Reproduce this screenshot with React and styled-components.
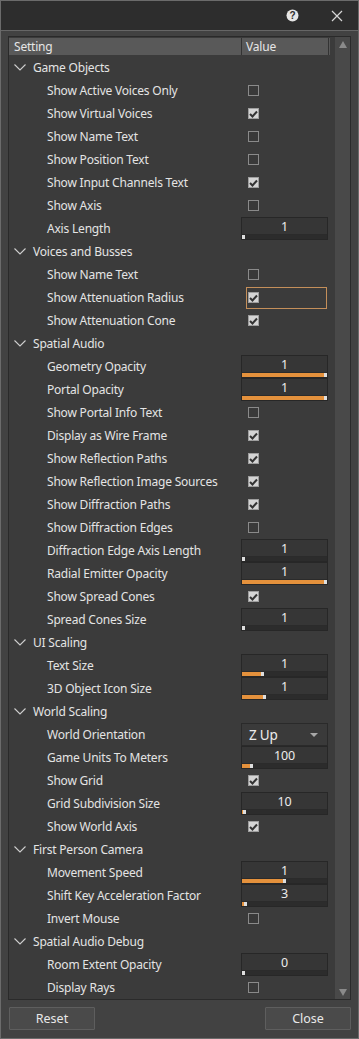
import React from "react";
import styled, { createGlobalStyle } from "styled-components";

const GlobalStyle = createGlobalStyle`
  html, body {
    margin: 0;
    padding: 0;
    background: #404040;
  }
  body {
    font-family: "Noto Sans", "Open Sans", sans-serif;
    font-size: 12px;
    letter-spacing: -0.2px;
    color: #e4e4e4;
  }
`;

const groups = [
  {
    title: "Game Objects",
    items: [
      { label: "Show Active Voices Only", type: "check", value: false },
      { label: "Show Virtual Voices", type: "check", value: true },
      { label: "Show Name Text", type: "check", value: false },
      { label: "Show Position Text", type: "check", value: false },
      { label: "Show Input Channels Text", type: "check", value: true },
      { label: "Show Axis", type: "check", value: false },
      { label: "Axis Length", type: "slider", value: "1", fill: 0 },
    ],
  },
  {
    title: "Voices and Busses",
    items: [
      { label: "Show Name Text", type: "check", value: false },
      { label: "Show Attenuation Radius", type: "check", value: true, focused: true },
      { label: "Show Attenuation Cone", type: "check", value: true },
    ],
  },
  {
    title: "Spatial Audio",
    items: [
      { label: "Geometry Opacity", type: "slider", value: "1", fill: 1 },
      { label: "Portal Opacity", type: "slider", value: "1", fill: 1 },
      { label: "Show Portal Info Text", type: "check", value: false },
      { label: "Display as Wire Frame", type: "check", value: true },
      { label: "Show Reflection Paths", type: "check", value: true },
      { label: "Show Reflection Image Sources", type: "check", value: true },
      { label: "Show Diffraction Paths", type: "check", value: true },
      { label: "Show Diffraction Edges", type: "check", value: false },
      { label: "Diffraction Edge Axis Length", type: "slider", value: "1", fill: 0 },
      { label: "Radial Emitter Opacity", type: "slider", value: "1", fill: 1 },
      { label: "Show Spread Cones", type: "check", value: true },
      { label: "Spread Cones Size", type: "slider", value: "1", fill: 0 },
    ],
  },
  {
    title: "UI Scaling",
    items: [
      { label: "Text Size", type: "slider", value: "1", fill: 0.23 },
      { label: "3D Object Icon Size", type: "slider", value: "1", fill: 0.26 },
    ],
  },
  {
    title: "World Scaling",
    items: [
      { label: "World Orientation", type: "select", value: "Z Up" },
      { label: "Game Units To Meters", type: "slider", value: "100", fill: 0.1 },
      { label: "Show Grid", type: "check", value: true },
      { label: "Grid Subdivision Size", type: "slider", value: "10", fill: 0.01 },
      { label: "Show World Axis", type: "check", value: true },
    ],
  },
  {
    title: "First Person Camera",
    items: [
      { label: "Movement Speed", type: "slider", value: "1", fill: 0.5 },
      { label: "Shift Key Acceleration Factor", type: "slider", value: "3", fill: 0.03 },
      { label: "Invert Mouse", type: "check", value: false },
    ],
  },
  {
    title: "Spatial Audio Debug",
    items: [
      { label: "Room Extent Opacity", type: "slider", value: "0", fill: 0 },
      { label: "Display Rays", type: "check", value: false },
    ],
  },
];

const Window = styled.div`
  width: 359px;
  height: 1039px;
  box-sizing: border-box;
  border: 1px solid #6b6b6b;
  display: flex;
  flex-direction: column;
  background: #424242;
`;

const TitleBar = styled.div`
  height: 29px;
  flex-shrink: 0;
  background: #2d2d2d;
  border-bottom: 1px solid #666666;
  display: flex;
  align-items: center;
  justify-content: flex-end;
  gap: 31px;
  padding-right: 14px;
`;

const IconButton = styled.div`
  width: 14px;
  height: 14px;
  display: flex;
  align-items: center;
  justify-content: center;
`;

const Body = styled.div`
  flex: 1;
  display: flex;
  flex-direction: column;
  padding: 5px 7px 7px 7px;
  gap: 7px;
  min-height: 0;
`;

const Panel = styled.div`
  border: 1px solid #2a2a2a;
  background: #3b3b3b;
  display: flex;
  gap: 5px;
  height: 964px;
  box-sizing: border-box;
  flex-shrink: 0;
`;

const Table = styled.div`
  width: 321px;
  display: flex;
  flex-direction: column;
`;

const HeaderRow = styled.div`
  margin-top: 1px;
  height: 17px;
  background: #595959;
  display: grid;
  grid-template-columns: 233px 87px 1px;
  margin-bottom: 1px;
`;

const HeaderCell = styled.div`
  padding-left: ${({ $pad }) => $pad}px;
  line-height: 17px;
  color: #e6e6e6;
  border-right: ${({ $divider }) => ($divider ? "1px solid #333" : "none")};
`;

const Row = styled.div`
  height: 23px;
  display: grid;
  grid-template-columns: 233px 87px;
  align-items: center;
`;

const GroupLabel = styled.div`
  display: flex;
  align-items: center;
  padding-left: 5px;
  gap: 7px;
  white-space: nowrap;
`;

const ItemLabel = styled.div`
  padding-left: 38px;
  white-space: nowrap;
`;

const ValueCell = styled.div`
  height: 23px;
  display: flex;
  align-items: center;
`;

const CheckWrap = styled.div`
  height: 22px;
  width: ${({ $focused }) => ($focused ? "81px" : "auto")};
  box-sizing: border-box;
  margin-left: 4px;
  display: flex;
  align-items: center;
  padding-left: 1px;
  border: 1px solid ${({ $focused }) => ($focused ? "#c48f5a" : "transparent")};
`;

const Box = styled.div`
  width: 11px;
  height: 11px;
  box-sizing: border-box;
  border: 1px solid ${({ $checked }) => ($checked ? "#9e9e9e" : "#8a8a8a")};
  background: ${({ $checked }) => ($checked ? "#d4d4d4" : "#393939")};
  display: flex;
  align-items: center;
  justify-content: center;
`;

const SliderBox = styled.div`
  width: 87px;
  height: 23px;
  margin-left: -1px;
  box-sizing: border-box;
  border: 1px solid #272727;
  background: #2b2b2b;
  display: flex;
  flex-direction: column;
`;

const NumberField = styled.div`
  height: 16px;
  background: #363636;
  text-align: center;
  font-size: 12.5px;
  line-height: 17px;
  color: #ececec;
`;

const Track = styled.div`
  margin-top: 1px;
  height: 4px;
  background: #2c2c2c;
  display: flex;
`;

const Fill = styled.div`
  height: 100%;
  background: #e4913c;
`;

const Handle = styled.div`
  width: 3px;
  height: 100%;
  background: #dedede;
`;

const Select = styled.div`
  width: 87px;
  height: 23px;
  margin-left: -1px;
  box-sizing: border-box;
  border: 1px solid #2a2a2a;
  background: #3a3a3a;
  display: flex;
  align-items: center;
  justify-content: space-between;
  padding: 0 9px 0 7px;
  font-size: 13.5px;
  color: #ececec;
`;

const Caret = styled.div`
  width: 0;
  height: 0;
  border-left: 4px solid transparent;
  border-right: 4px solid transparent;
  border-top: 4px solid #a8a8a8;
`;

const Scrollbar = styled.div`
  width: 15px;
  background: #494949;
  display: flex;
  flex-direction: column;
  justify-content: space-between;
  align-items: center;
  padding: 4px 0 3px;
  box-sizing: border-box;
`;

const Arrow = styled.div`
  width: 0;
  height: 0;
  border-left: 4px solid transparent;
  border-right: 4px solid transparent;
  ${({ $down }) =>
    $down ? "border-top: 7px solid #8a8a8a;" : "border-bottom: 7px solid #8a8a8a;"}
`;

const Footer = styled.div`
  display: flex;
  justify-content: space-between;
  padding-left: 1px;
`;

const Button = styled.button`
  width: 86px;
  height: 23px;
  box-sizing: border-box;
  background: #4a4a4a;
  border: 1px solid #5e5e5e;
  border-radius: 1px;
  color: #e8e8e8;
  font-family: "Noto Sans", "Open Sans", sans-serif;
  font-size: 12.5px;
  padding: 0;
`;

const Chevron = () => (
  <svg width="12" height="7" viewBox="0 0 12 7">
    <polyline points="0.5,0.5 6,6 11.5,0.5" fill="none" stroke="#cfcfcf" strokeWidth="1.1" />
  </svg>
);

const CheckMark = () => (
  <svg width="9" height="8" viewBox="0 0 9 8">
    <polyline points="1,4 3.5,6.5 8,1.5" fill="none" stroke="#333" strokeWidth="2" />
  </svg>
);

const Slider = ({ value, fill }) => (
  <SliderBox>
    <NumberField>{value}</NumberField>
    <Track>
      <Fill style={{ width: `${Math.round(fill * 82)}px` }} />
      <Handle />
    </Track>
  </SliderBox>
);

const Value = ({ item }) => {
  if (item.type === "check") {
    return (
      <CheckWrap $focused={item.focused}>
        <Box $checked={item.value}>{item.value && <CheckMark />}</Box>
      </CheckWrap>
    );
  }
  if (item.type === "slider") return <Slider value={item.value} fill={item.fill} />;
  return (
    <Select>
      <span>{item.value}</span>
      <Caret />
    </Select>
  );
};

const App = () => (
  <>
    <GlobalStyle />
    <Window>
      <TitleBar>
        <IconButton>
          <svg width="13" height="13" viewBox="0 0 13 13">
            <circle cx="6.5" cy="6.5" r="6" fill="#e6e6e6" />
            <text x="6.5" y="10" textAnchor="middle" fontSize="10" fontWeight="bold" fontFamily="Liberation Sans, sans-serif" fill="#2d2d2d">?</text>
          </svg>
        </IconButton>
        <IconButton>
          <svg width="12" height="12" viewBox="0 0 12 12">
            <path d="M1 1 L11 11 M11 1 L1 11" stroke="#d6d6d6" strokeWidth="1.2" />
          </svg>
        </IconButton>
      </TitleBar>
      <Body>
        <Panel>
          <Table>
            <HeaderRow>
              <HeaderCell $pad={5} $divider>Setting</HeaderCell>
              <HeaderCell $pad={4} $divider>Value</HeaderCell>
            </HeaderRow>
            {groups.map((group) => (
              <React.Fragment key={group.title}>
                <Row>
                  <GroupLabel>
                    <Chevron />
                    {group.title}
                  </GroupLabel>
                </Row>
                {group.items.map((item) => (
                  <Row key={group.title + item.label}>
                    <ItemLabel>{item.label}</ItemLabel>
                    <ValueCell>
                      <Value item={item} />
                    </ValueCell>
                  </Row>
                ))}
              </React.Fragment>
            ))}
          </Table>
          <Scrollbar>
            <Arrow />
            <Arrow $down />
          </Scrollbar>
        </Panel>
        <Footer>
          <Button>Reset</Button>
          <Button>Close</Button>
        </Footer>
      </Body>
    </Window>
  </>
);

export default App;
